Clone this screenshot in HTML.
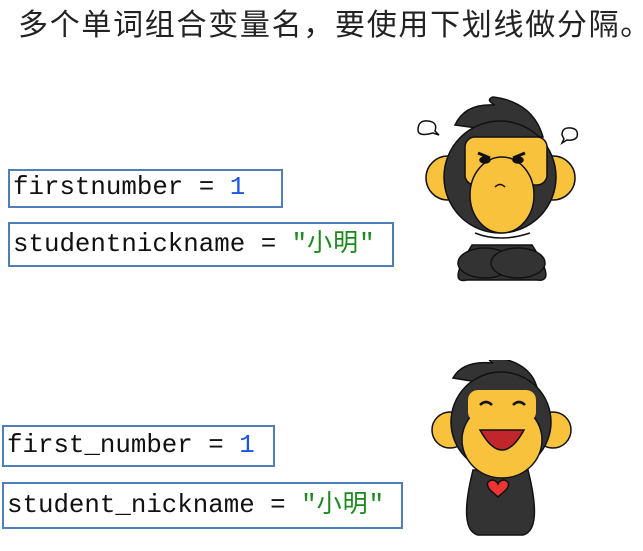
<!DOCTYPE html>
<html><head><meta charset="utf-8"><style>
body{margin:0;width:643px;height:551px;background:#fff;position:relative;overflow:hidden}
.t{position:absolute;left:18px;top:1px;font:30px "Noto Sans CJK SC",sans-serif;color:#222;white-space:nowrap;letter-spacing:1.7px;line-height:42px}
.b{position:absolute;border:2px solid #4f7fbb;box-sizing:border-box;font:25.8px "Liberation Mono","Noto Sans CJK SC",monospace;color:#111;white-space:nowrap;padding-left:3px;line-height:34px}
.n{color:#1a55e0}.s{color:#1a8a1a}
.c{font-size:25px;letter-spacing:1px}
svg{position:absolute}
</style></head><body>
<div class="t">多个单词组合变量名，要使用下划线做分隔。</div>
<div class="b" style="left:8px;top:169px;width:275px;height:39px">firstnumber = <span class="n">1</span></div>
<div class="b" style="left:8px;top:222px;width:386px;height:45px;line-height:41px">studentnickname = <span class="s">"<span class="c">小明</span>"</span></div>
<div class="b" style="left:2px;top:425px;width:273px;height:42px;line-height:38px">first_number = <span class="n">1</span></div>
<div class="b" style="left:2px;top:482px;width:401px;height:47px;line-height:43px">student_nickname = <span class="s">"<span class="c">小明</span>"</span></div>

<svg style="left:410px;top:95px" width="180" height="190" viewBox="0 0 180 190" stroke="#111" stroke-width="1.5">
<path d="M8 35 q0 -10 10 -9 q10 1 7 10 l4 4 l-6 -2 q-15 4 -15 -3z" fill="#fff"/>
<path d="M152 40 q0 -8 9 -7 q8 1 6 9 q-3 4 -10 3 l-5 3 l2 -4z" fill="#fff"/>
<circle cx="38" cy="83" r="22" fill="#f9c23c"/><circle cx="143" cy="83" r="22" fill="#f9c23c"/>
<path d="M62 150 q-25 40 -5 35 h70 q20 3 -5 -35z" fill="#333"/>
<ellipse cx="75" cy="168" rx="27" ry="15" fill="#333"/><ellipse cx="108" cy="168" rx="27" ry="15" fill="#333"/>
<path d="M45 30 q10 -22 40 -20 q-10 -5 -2 -8 q40 5 50 40z" fill="#333"/>
<circle cx="90" cy="82" r="56" fill="#333"/>
<rect x="55" y="42" width="82" height="48" rx="10" fill="#f9c23c"/>
<ellipse cx="92" cy="100" rx="32" ry="38" fill="#f9c23c"/>
<path d="M65 138 q25 10 55 0" fill="none"/>
<path d="M68 58 l12 5 M115 58 l-12 5" stroke-width="3"/>
<ellipse cx="75" cy="65" rx="5" ry="3" fill="#111"/><ellipse cx="108" cy="65" rx="5" ry="3" fill="#111"/>
<path d="M85 92 q5 -5 10 0" fill="none"/>
</svg>

<svg style="left:428px;top:360px" width="150" height="180" viewBox="0 0 150 180" stroke="#111" stroke-width="1.5">
<circle cx="22" cy="70" r="18" fill="#f9c23c"/><circle cx="125" cy="70" r="18" fill="#f9c23c"/>
<path d="M45 110 q-15 60 5 65 h45 q20 -5 5 -65z" fill="#333"/>
<path d="M25 18 q10 -18 40 -15 q-8 -5 0 -6 q40 5 45 35z" fill="#333"/>
<circle cx="73" cy="62" r="50" fill="#333"/>
<ellipse cx="74" cy="80" rx="40" ry="38" fill="#f9c23c"/>
<rect x="40" y="30" width="68" height="32" rx="10" fill="#f9c23c" stroke="none"/>
<path d="M52 45 q6 -6 12 0 M85 45 q6 -6 12 0" fill="none" stroke-width="2.5"/>
<path d="M52 70 q22 40 44 0z" fill="#c0262b"/>
<path d="M62 130 q-6 -8 2 -10 q4 0 6 4 q2 -4 6 -4 q8 2 2 10 l-8 7z" fill="#e33" />
</svg>
</body></html>
